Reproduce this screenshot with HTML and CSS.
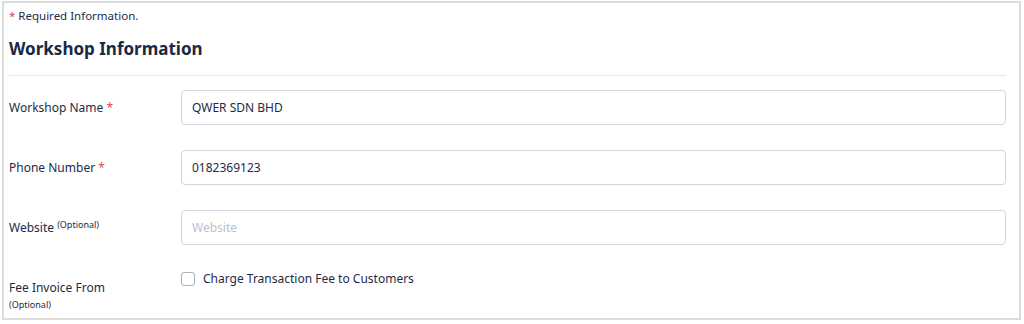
FILE: index.html
```html
<!DOCTYPE html>
<html lang="en">
<head>
    <meta charset="UTF-8">
    <meta name="viewport" content="width=device-width, initial-scale=1.0">
    <title>Workshop Information</title>
    <link rel="stylesheet" href="styles.css">
</head>
<body>
    <div class="panel">
        <p class="required-note"><span class="req">*</span> Required Information.</p>
        <h2 class="section-title">Workshop Information</h2>
        <form class="info-form">
            <div class="form-row">
                <label for="workshopName">Workshop Name <span class="req">*</span></label>
                <input type="text" id="workshopName" value="QWER SDN BHD">
            </div>
            <div class="form-row">
                <label for="phone">Phone Number <span class="req">*</span></label>
                <input type="text" id="phone" value="0182369123">
            </div>
            <div class="form-row">
                <label for="website">Website <sup class="optional">(Optional)</sup></label>
                <input type="text" id="website" placeholder="Website">
            </div>
            <div class="form-row check-row">
                <div class="label-block">
                    <span>Fee Invoice From</span>
                    <span class="optional">(Optional)</span>
                </div>
                <label class="check">
                    <input type="checkbox" id="chargeFee">
                    <span class="box"></span>
                    Charge Transaction Fee to Customers
                </label>
            </div>
        </form>
    </div>
</body>
</html>
```

FILE: styles.css
```css
body {
    font-family: "Noto Sans", Arial, sans-serif;
    margin: 0;
    padding: 0;
    background: #fff;
    color: #1e2b47;
}

.panel {
    box-sizing: border-box;
    height: 319px;
    margin: 1px 3px 0 2px;
    border: 2px solid #dcdcdc;
    padding: 0 13px 0 5px;
}

.required-note {
    margin: 4px 0 0;
    font-size: 11.5px;
    line-height: 18px;
}

.req {
    color: #e0464e;
}

.section-title {
    margin: 12px 0 0;
    font-size: 17px;
    line-height: 24px;
    font-weight: 700;
    color: #1a2946;
    padding-bottom: 14px;
    border-bottom: 1px solid #e6e9ee;
}

.info-form {
    display: flex;
    flex-direction: column;
    gap: 25px;
    padding-top: 14px;
}

.form-row {
    display: grid;
    grid-template-columns: 172px 1fr;
    align-items: center;
    font-size: 12px;
}

.form-row input[type="text"] {
    box-sizing: border-box;
    height: 35px;
    width: 100%;
    border: 1px solid #cfd6e2;
    border-radius: 4px;
    padding: 0 10px;
    font-family: inherit;
    font-size: 12px;
    color: #1e2b47;
    outline: none;
}

.form-row input::placeholder {
    color: #b9c1cd;
}

.optional {
    font-size: 9px;
    vertical-align: 4px;
    line-height: 1;
}

.check-row {
    align-items: start;
}

.label-block {
    display: flex;
    flex-direction: column;
    padding-top: 9px;
    line-height: 18px;
}

.label-block .optional {
    vertical-align: baseline;
    line-height: 16px;
}

.check {
    display: flex;
    align-items: center;
    gap: 8px;
    line-height: 18px;
}

.check input {
    display: none;
}

.check .box {
    width: 12px;
    height: 12px;
    border: 1px solid #a9b1bd;
    border-radius: 3px;
}
```
